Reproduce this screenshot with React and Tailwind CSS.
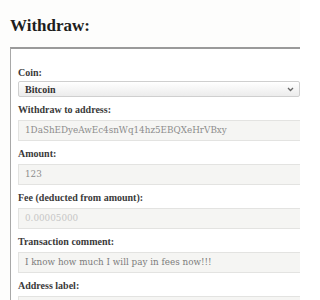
import React from "react";

const fields = [
  { label: "Withdraw to address:", value: "1DaShEDyeAwEc4snWq14hz5EBQXeHrVBxy", tone: "text-[#8c8c8c]" },
  { label: "Amount:", value: "123", tone: "text-[#8c8c8c]" },
  { label: "Fee (deducted from amount):", value: "0.00005000", tone: "text-[#c6c6c6]" },
  { label: "Transaction comment:", value: "I know how much I will pay in fees now!!!", tone: "text-[#7c7c7c]" },
  { label: "Address label:", value: "lololololol", tone: "text-[#7c7c7c]" },
];

const valueFont = { fontFamily: '"DejaVu Serif", "Liberation Serif", serif' };

function Field({ label, value, tone }) {
  return (
    <div className="mb-[6px]">
      <label className="block h-[14px] mb-[3px] text-[10px] leading-[14px] font-bold text-[#3a3a3a]">
        {label}
      </label>
      <div
        className={`h-[21px] flex items-center px-[6px] bg-[#f5f5f3] border border-[#e3e3e1] text-[8.8px] whitespace-nowrap ${tone}`}
        style={valueFont}
      >
        {value}
      </div>
    </div>
  );
}

export default function App() {
  return (
    <div
      className="w-[300px] h-[300px] overflow-hidden bg-[#fdfdfc] pl-[10px] pt-[15px]"
      style={{ fontFamily: '"Liberation Serif", "DejaVu Serif", serif' }}
    >
      <h1 className="text-[17px] leading-[22px] font-bold text-[#1e1e1e] mb-[10px]">
        Withdraw:
      </h1>

      <div className="w-[400px] bg-white border border-[#a8a8a8] border-t-2 border-t-[#9a9a9a] pt-[17px] pl-[7px] pr-[10px]">
        <div className="mb-[6px]">
          <label className="block h-[14px] mb-[1px] text-[10px] leading-[14px] font-bold text-[#3a3a3a]">
            Coin:
          </label>
          <div className="w-[282px] h-[16px] flex items-center justify-between px-[6px] rounded-[2px] border border-[#cfcfcf] bg-gradient-to-b from-white to-[#ececec] text-[10px] font-bold text-[#333]">
            <span>Bitcoin</span>
            <svg width="7" height="5" viewBox="0 0 7 5" className="mr-[-1px]">
              <path d="M1 1l2.5 2.5L6 1" fill="none" stroke="#666" strokeWidth="1.3" />
            </svg>
          </div>
        </div>

        {fields.map((f) => (
          <Field key={f.label} {...f} />
        ))}
      </div>
    </div>
  );
}
